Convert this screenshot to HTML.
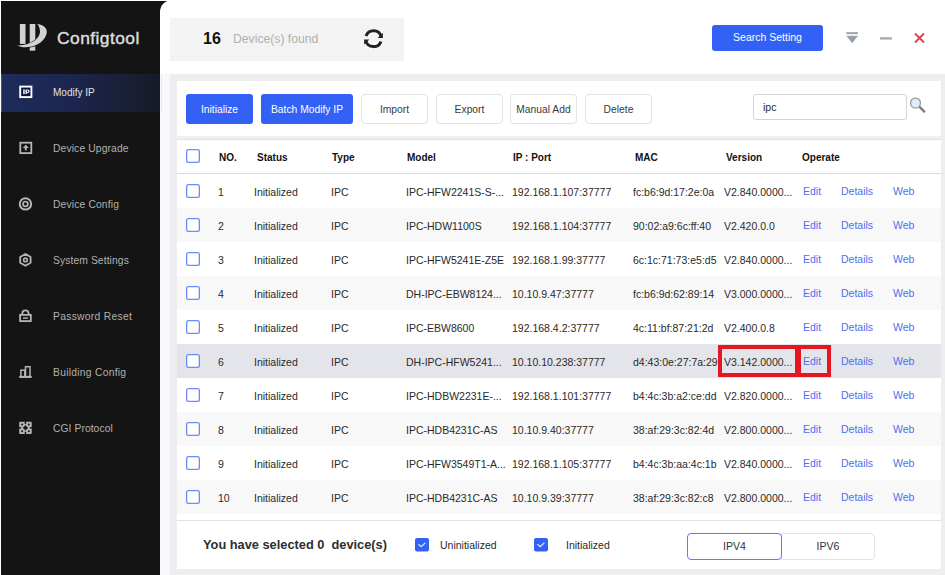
<!DOCTYPE html>
<html><head><meta charset="utf-8">
<style>
*{margin:0;padding:0;box-sizing:border-box}
html,body{width:945px;height:575px;overflow:hidden;background:#fff;font-family:"Liberation Sans",sans-serif}
.a{position:absolute;white-space:nowrap}
svg{position:absolute;overflow:visible}
#side{position:absolute;left:0;top:0;width:175px;height:575px;background:#141414}
#main{position:absolute;left:160px;top:0;width:785px;height:575px;background:#fff;border-top-left-radius:12px}
#frame{position:absolute;left:0;top:0;width:945px;height:575px;border-left:1px solid #fff;border-top:1px solid #fff}
.logotext{left:57px;top:28px;color:#dcdcdc;font-size:17.4px;letter-spacing:0.45px;-webkit-text-stroke:0.45px #dcdcdc}
.nav{position:absolute;left:1px;width:159px;height:38px}
.nt{left:53px;color:#b2b2b2;font-size:10.3px}
.act{background:linear-gradient(90deg,#1e2c5c 0%,#1c2650 40%,#1a2038 75%,#171a27 100%);border-left:1px solid #2e50d8}
#hdr{left:170px;top:18px;width:234px;height:43px;background:#f3f3f3}
#body{left:170px;top:74px;width:775px;height:501px;background:#eeeeee}
#panel{left:177px;top:81px;width:764px;height:488px;background:#fff}
.btn{position:absolute;top:94px;height:30px;border-radius:3px;font-size:10.3px;text-align:center;line-height:30px;padding-top:1px;white-space:nowrap}
.bp{background:#3361f6;color:#fff}
.bw{background:#fff;border:1px solid #e2e2e2;border-radius:4px;color:#3a3a3a;line-height:27px}
#strip{left:177px;top:136px;width:764px;height:4px;background:#eef0f3;border-bottom:1px solid #e0e2e7}
.row{position:absolute;left:177px;width:764px;height:34px}
.cb{position:absolute;left:186px;width:14px;height:14px;border-radius:2.5px;background:#fff;box-shadow:inset 0 0 0 1.3px #6b8cf7}
.t{font-size:10.5px;color:#2a2a2a}
.th{font-size:10px;color:#111;font-weight:bold}
.lk{font-size:10.5px;color:#4d6ff2}
</style></head><body>
<div id="side"></div>
<div id="main"></div>

<svg style="left:14px;top:20px" width="38" height="34" viewBox="0 0 38 34">
<g fill="#d2d2d2">
<rect x="5.9" y="4" width="5.6" height="19.9"/>
<rect x="15.7" y="4" width="5.6" height="19"/>
<rect x="15.7" y="25" width="5.6" height="5.7"/>
<path d="M23.3 4 C27.5 4.3 32.8 7 32.8 11.5 C32.8 19 24 27.2 11.8 27.2 C8 27.2 5.5 26.3 3.5 25.4 C10 25.6 17 23.5 21.3 20.1 C24.5 17.5 26 14.5 26 11.8 C26 8.5 24.8 5.8 23.3 4 Z" stroke="#141414" stroke-width="1.2" paint-order="stroke"/>
</g></svg>
<div class="a logotext">Configtool</div>
<div class="nav act" style="top:74px"></div>
<div class="a nt" style="top:87px;letter-spacing:0px;color:#e2e2e2;font-size:10px">Modify IP</div>
<div class="a nt" style="top:143px;letter-spacing:0.13px;">Device Upgrade</div>
<div class="a nt" style="top:199px;letter-spacing:0.15px;">Device Config</div>
<div class="a nt" style="top:255px;letter-spacing:0.1px;">System Settings</div>
<div class="a nt" style="top:311px;letter-spacing:0.3px;">Password Reset</div>
<div class="a nt" style="top:367px;letter-spacing:0.27px;">Building Config</div>
<div class="a nt" style="top:423px;letter-spacing:0.07px;">CGI Protocol</div>
<svg style="left:0;top:0" width="160" height="575">
<rect x="20.2" y="86.6" width="11.2" height="10.5" fill="#0c1440" stroke="#fff" stroke-width="1.9"/>
<g fill="#dcdde6"><rect x="23.1" y="89.4" width="1.7" height="4.7"/><path d="M25.4 89.4 L27.8 89.4 C29.2 89.4 29.6 90.3 29.6 91.2 C29.6 92.1 29.1 92.9 27.8 92.9 L27.1 92.9 L27.1 94.1 L25.4 94.1 Z M27.1 90.5 L27.1 91.9 L27.6 91.9 C28 91.9 28.1 91.6 28.1 91.2 C28.1 90.8 28 90.5 27.6 90.5 Z" fill-rule="evenodd"/></g>
<rect x="20.3" y="142.7" width="11" height="10.4" fill="none" stroke="#b5b5b5" stroke-width="1.8"/>
<path d="M25.8 144.8 L28.9 147.9 L26.8 147.9 L26.8 150.2 L24.8 150.2 L24.8 147.9 L22.7 147.9 Z" fill="#b5b5b5"/>
<circle cx="25.45" cy="203.9" r="5.7" fill="none" stroke="#b5b5b5" stroke-width="2"/>
<circle cx="25.45" cy="203.9" r="2.4" fill="none" stroke="#b5b5b5" stroke-width="1.7"/>
<path d="M25.45 254 L30.6 257 L30.6 262.8 L25.45 265.8 L20.2 262.8 L20.2 257 Z" fill="none" stroke="#b5b5b5" stroke-width="1.8" stroke-linejoin="round"/>
<circle cx="25.45" cy="259.9" r="1.8" fill="none" stroke="#b5b5b5" stroke-width="1.6"/>
<path d="M22.3 314.2 L22.3 313.5 A3.15 3.15 0 0 1 28.6 313.5 L28.6 314.2" fill="none" stroke="#b5b5b5" stroke-width="1.8"/>
<rect x="20.1" y="314.9" width="10.7" height="6.2" fill="none" stroke="#b5b5b5" stroke-width="1.8"/>
<rect x="23" y="317.2" width="4.9" height="1.8" fill="#b5b5b5" opacity="0.8"/>
<rect x="19.2" y="375.9" width="12.5" height="2" fill="#b5b5b5"/>
<rect x="20.9" y="370.2" width="3.9" height="6.5" fill="none" stroke="#b5b5b5" stroke-width="1.5"/>
<rect x="25.5" y="366.7" width="4.5" height="10" fill="none" stroke="#b5b5b5" stroke-width="1.5"/>
<g transform="translate(19.2 421.7)">
<rect x="0" y="0" width="12.5" height="12.3" rx="1" fill="#b5b5b5"/>
<g fill="#141414">
<circle cx="2.9" cy="2.8" r="1.0"/><circle cx="9.6" cy="2.8" r="1.0"/><circle cx="2.9" cy="9.5" r="1.0"/><circle cx="9.6" cy="9.5" r="1.0"/>
<rect x="5.5" y="-0.2" width="1.5" height="2.4"/><rect x="5.5" y="10.1" width="1.5" height="2.4"/>
<rect x="-0.2" y="5.4" width="2.1" height="1.5"/><rect x="10.6" y="5.4" width="2.1" height="1.5"/>
<rect x="5.6" y="3.8" width="1.3" height="4.9"/><rect x="4.0" y="5.5" width="4.5" height="1.3"/>
<path d="M6.25 3.9 L8.6 6.15 L6.25 8.5 L3.9 6.15 Z"/>
</g></g>
</svg>
<div class="a" id="hdr"></div>
<div class="a" style="left:203px;top:30px;font-size:16px;font-weight:bold;color:#111">16</div>
<div class="a" style="left:233px;top:32px;font-size:12.2px;color:#b0b0b0">Device(s) found</div>
<svg style="left:360px;top:26px" width="28" height="26" viewBox="0 0 28 26">
<g stroke="#fff" stroke-width="5" fill="none" opacity="0.9"><path d="M6 10 A8 8 0 0 1 21.2 10.6"/><path d="M21 15.4 A8 8 0 0 1 5.8 14.8"/></g>
<g stroke="#222" stroke-width="3" fill="none"><path d="M6 10 A8 8 0 0 1 21.2 10.6"/><path d="M21 15.4 A8 8 0 0 1 5.8 14.8"/></g>
<path d="M22.85 6.8 L22.85 12 L17.6 12 Z" fill="#222"/>
<path d="M4.15 18.6 L4.15 13.4 L9.4 13.4 Z" fill="#222"/>
</svg>
<div class="btn bp" style="left:712px;top:25px;width:111px;height:26px;line-height:24px;padding-top:0;font-size:10.5px">Search Setting</div>
<svg style="left:840px;top:25px" width="100" height="26">
<rect x="6.3" y="7.2" width="11.7" height="1.9" fill="#9aa0a9"/>
<path d="M6.3 10.7 L18 10.7 L12.15 18.3 Z" fill="#9aa0a9"/>
<rect x="40" y="12.2" width="12" height="2.4" fill="#a9adb5"/>
<path d="M75 8.5 L84 17.5 M84 8.5 L75 17.5" stroke="#e0434f" stroke-width="2"/>
</svg>
<div class="a" id="body"></div><div class="a" id="panel"></div>
<div class="a" style="left:160px;top:74px;width:10px;height:501px;background:#f7f8fb"></div>
<div class="a" style="left:161px;top:74px;width:1px;height:38px;background:#e3e8fb"></div>
<div class="btn bp" style="left:186px;width:67px">Initialize</div>
<div class="btn bp" style="left:261px;width:92px">Batch Modify IP</div>
<div class="btn bw" style="left:361px;width:67px">Import</div>
<div class="btn bw" style="left:436px;width:67px">Export</div>
<div class="btn bw" style="left:510px;width:67px">Manual Add</div>
<div class="btn bw" style="left:585px;width:67px">Delete</div>
<div class="a" style="left:753px;top:94px;width:154px;height:26px;border:1px solid #d4d4d4;border-radius:3px;background:#fff"></div>
<div class="a t" style="left:763px;top:101px;font-size:10.5px">ipc</div>
<svg style="left:904px;top:92px" width="26" height="26">
<line x1="15.3" y1="14.6" x2="20.3" y2="19.6" stroke="#7a7a7a" stroke-width="2.2" stroke-linecap="round"/>
<circle cx="11.5" cy="11.1" r="5" fill="#e2edf9" stroke="#9a9a9a" stroke-width="1.3"/>
</svg>
<div class="a" id="strip"></div>
<div class="a" style="left:177px;top:173px;width:764px;height:1px;background:#dadada"></div>
<div class="cb" style="top:149px"></div>
<div class="a th" style="left:219px;top:151.5px">NO.</div>
<div class="a th" style="left:257px;top:151.5px">Status</div>
<div class="a th" style="left:332px;top:151.5px">Type</div>
<div class="a th" style="left:407px;top:151.5px">Model</div>
<div class="a th" style="left:513px;top:151.5px">IP : Port</div>
<div class="a th" style="left:635px;top:151.5px">MAC</div>
<div class="a th" style="left:726px;top:151.5px">Version</div>
<div class="a th" style="left:802px;top:151.5px">Operate</div>
<div class="row" style="top:174px;background:#fff"></div>
<div class="cb" style="top:184px"></div>
<div class="a t" style="left:218px;top:185.5px">1</div>
<div class="a t" style="left:254px;top:185.5px">Initialized</div>
<div class="a t" style="left:331px;top:185.5px">IPC</div>
<div class="a t" style="left:406px;top:185.5px">IPC-HFW2241S-S-...</div>
<div class="a t" style="left:512px;top:185.5px">192.168.1.107:37777</div>
<div class="a t" style="left:633px;top:185.5px">fc:b6:9d:17:2e:0a</div>
<div class="a t" style="left:724px;top:185.5px">V2.840.0000...</div>
<div class="a lk" style="left:803px;top:184.5px">Edit</div>
<div class="a lk" style="left:841px;top:184.5px">Details</div>
<div class="a lk" style="left:893px;top:184.5px">Web</div>
<div class="row" style="top:208px;background:#f8f8f8"></div>
<div class="cb" style="top:218px"></div>
<div class="a t" style="left:218px;top:219.5px">2</div>
<div class="a t" style="left:254px;top:219.5px">Initialized</div>
<div class="a t" style="left:331px;top:219.5px">IPC</div>
<div class="a t" style="left:406px;top:219.5px">IPC-HDW1100S</div>
<div class="a t" style="left:512px;top:219.5px">192.168.1.104:37777</div>
<div class="a t" style="left:633px;top:219.5px">90:02:a9:6c:ff:40</div>
<div class="a t" style="left:724px;top:219.5px">V2.420.0.0</div>
<div class="a lk" style="left:803px;top:218.5px">Edit</div>
<div class="a lk" style="left:841px;top:218.5px">Details</div>
<div class="a lk" style="left:893px;top:218.5px">Web</div>
<div class="row" style="top:242px;background:#fff"></div>
<div class="cb" style="top:252px"></div>
<div class="a t" style="left:218px;top:253.5px">3</div>
<div class="a t" style="left:254px;top:253.5px">Initialized</div>
<div class="a t" style="left:331px;top:253.5px">IPC</div>
<div class="a t" style="left:406px;top:253.5px">IPC-HFW5241E-Z5E</div>
<div class="a t" style="left:512px;top:253.5px">192.168.1.99:37777</div>
<div class="a t" style="left:633px;top:253.5px">6c:1c:71:73:e5:d5</div>
<div class="a t" style="left:724px;top:253.5px">V2.840.0000...</div>
<div class="a lk" style="left:803px;top:252.5px">Edit</div>
<div class="a lk" style="left:841px;top:252.5px">Details</div>
<div class="a lk" style="left:893px;top:252.5px">Web</div>
<div class="row" style="top:276px;background:#f8f8f8"></div>
<div class="cb" style="top:286px"></div>
<div class="a t" style="left:218px;top:287.5px">4</div>
<div class="a t" style="left:254px;top:287.5px">Initialized</div>
<div class="a t" style="left:331px;top:287.5px">IPC</div>
<div class="a t" style="left:406px;top:287.5px">DH-IPC-EBW8124...</div>
<div class="a t" style="left:512px;top:287.5px">10.10.9.47:37777</div>
<div class="a t" style="left:633px;top:287.5px">fc:b6:9d:62:89:14</div>
<div class="a t" style="left:724px;top:287.5px">V3.000.0000...</div>
<div class="a lk" style="left:803px;top:286.5px">Edit</div>
<div class="a lk" style="left:841px;top:286.5px">Details</div>
<div class="a lk" style="left:893px;top:286.5px">Web</div>
<div class="row" style="top:310px;background:#fff"></div>
<div class="cb" style="top:320px"></div>
<div class="a t" style="left:218px;top:321.5px">5</div>
<div class="a t" style="left:254px;top:321.5px">Initialized</div>
<div class="a t" style="left:331px;top:321.5px">IPC</div>
<div class="a t" style="left:406px;top:321.5px">IPC-EBW8600</div>
<div class="a t" style="left:512px;top:321.5px">192.168.4.2:37777</div>
<div class="a t" style="left:633px;top:321.5px">4c:11:bf:87:21:2d</div>
<div class="a t" style="left:724px;top:321.5px">V2.400.0.8</div>
<div class="a lk" style="left:803px;top:320.5px">Edit</div>
<div class="a lk" style="left:841px;top:320.5px">Details</div>
<div class="a lk" style="left:893px;top:320.5px">Web</div>
<div class="row" style="top:344px;background:#e4e5ea"></div>
<div class="cb" style="top:354px"></div>
<div class="a t" style="left:218px;top:355.5px">6</div>
<div class="a t" style="left:254px;top:355.5px">Initialized</div>
<div class="a t" style="left:331px;top:355.5px">IPC</div>
<div class="a t" style="left:406px;top:355.5px">DH-IPC-HFW5241...</div>
<div class="a t" style="left:512px;top:355.5px">10.10.10.238:37777</div>
<div class="a t" style="left:633px;top:355.5px">d4:43:0e:27:7a:29</div>
<div class="a t" style="left:724px;top:355.5px">V3.142.0000...</div>
<div class="a lk" style="left:803px;top:354.5px">Edit</div>
<div class="a lk" style="left:841px;top:354.5px">Details</div>
<div class="a lk" style="left:893px;top:354.5px">Web</div>
<div class="row" style="top:378px;background:#fff"></div>
<div class="cb" style="top:388px"></div>
<div class="a t" style="left:218px;top:389.5px">7</div>
<div class="a t" style="left:254px;top:389.5px">Initialized</div>
<div class="a t" style="left:331px;top:389.5px">IPC</div>
<div class="a t" style="left:406px;top:389.5px">IPC-HDBW2231E-...</div>
<div class="a t" style="left:512px;top:389.5px">192.168.1.101:37777</div>
<div class="a t" style="left:633px;top:389.5px">b4:4c:3b:a2:ce:dd</div>
<div class="a t" style="left:724px;top:389.5px">V2.820.0000...</div>
<div class="a lk" style="left:803px;top:388.5px">Edit</div>
<div class="a lk" style="left:841px;top:388.5px">Details</div>
<div class="a lk" style="left:893px;top:388.5px">Web</div>
<div class="row" style="top:412px;background:#f8f8f8"></div>
<div class="cb" style="top:422px"></div>
<div class="a t" style="left:218px;top:423.5px">8</div>
<div class="a t" style="left:254px;top:423.5px">Initialized</div>
<div class="a t" style="left:331px;top:423.5px">IPC</div>
<div class="a t" style="left:406px;top:423.5px">IPC-HDB4231C-AS</div>
<div class="a t" style="left:512px;top:423.5px">10.10.9.40:37777</div>
<div class="a t" style="left:633px;top:423.5px">38:af:29:3c:82:4d</div>
<div class="a t" style="left:724px;top:423.5px">V2.800.0000...</div>
<div class="a lk" style="left:803px;top:422.5px">Edit</div>
<div class="a lk" style="left:841px;top:422.5px">Details</div>
<div class="a lk" style="left:893px;top:422.5px">Web</div>
<div class="row" style="top:446px;background:#fff"></div>
<div class="cb" style="top:456px"></div>
<div class="a t" style="left:218px;top:457.5px">9</div>
<div class="a t" style="left:254px;top:457.5px">Initialized</div>
<div class="a t" style="left:331px;top:457.5px">IPC</div>
<div class="a t" style="left:406px;top:457.5px">IPC-HFW3549T1-A...</div>
<div class="a t" style="left:512px;top:457.5px">192.168.1.105:37777</div>
<div class="a t" style="left:633px;top:457.5px">b4:4c:3b:aa:4c:1b</div>
<div class="a t" style="left:724px;top:457.5px">V2.840.0000...</div>
<div class="a lk" style="left:803px;top:456.5px">Edit</div>
<div class="a lk" style="left:841px;top:456.5px">Details</div>
<div class="a lk" style="left:893px;top:456.5px">Web</div>
<div class="row" style="top:480px;background:#f8f8f8"></div>
<div class="cb" style="top:490px"></div>
<div class="a t" style="left:218px;top:491.5px">10</div>
<div class="a t" style="left:254px;top:491.5px">Initialized</div>
<div class="a t" style="left:331px;top:491.5px">IPC</div>
<div class="a t" style="left:406px;top:491.5px">IPC-HDB4231C-AS</div>
<div class="a t" style="left:512px;top:491.5px">10.10.9.39:37777</div>
<div class="a t" style="left:633px;top:491.5px">38:af:29:3c:82:c8</div>
<div class="a t" style="left:724px;top:491.5px">V2.800.0000...</div>
<div class="a lk" style="left:803px;top:490.5px">Edit</div>
<div class="a lk" style="left:841px;top:490.5px">Details</div>
<div class="a lk" style="left:893px;top:490.5px">Web</div>
<div class="a" style="left:718px;top:345px;width:113px;height:32px;border:4px solid #e5161f"></div>
<div class="a" style="left:795px;top:345px;width:6px;height:32px;background:#e5161f"></div>
<div class="a" style="left:177px;top:520px;width:764px;height:1px;background:#e2e2e2"></div>
<div class="a" style="left:203px;top:537px;font-size:12.8px;font-weight:bold;color:#2e2e2e">You have selected 0&nbsp; device(s)</div>
<svg style="left:415px;top:538px" width="14" height="14"><rect x="0" y="0" width="14" height="13.5" rx="2" fill="#3361f6"/><path d="M3.4 6.2 L6.3 8.6 L10.4 4.7" stroke="#d6e0ff" stroke-width="1.3" fill="none"/></svg>
<svg style="left:534px;top:538px" width="14" height="14"><rect x="0" y="0" width="14" height="13.5" rx="2" fill="#3361f6"/><path d="M3.4 6.2 L6.3 8.6 L10.4 4.7" stroke="#d6e0ff" stroke-width="1.3" fill="none"/></svg>
<div class="a t" style="left:440px;top:539px">Uninitialized</div>
<div class="a t" style="left:566px;top:539px">Initialized</div>
<div class="a" style="left:781px;top:533px;width:94px;height:27px;border:1px solid #e3e3e3;border-radius:0 4px 4px 0;font-size:10.5px;color:#333;text-align:center;line-height:25px">IPV6</div>
<div class="a" style="left:687px;top:533px;width:95px;height:27px;border:1px solid #5a7ef5;border-radius:4px;background:#fff;font-size:10.5px;color:#333;text-align:center;line-height:25px">IPV4</div>
<div id="frame"></div>
</body></html>
